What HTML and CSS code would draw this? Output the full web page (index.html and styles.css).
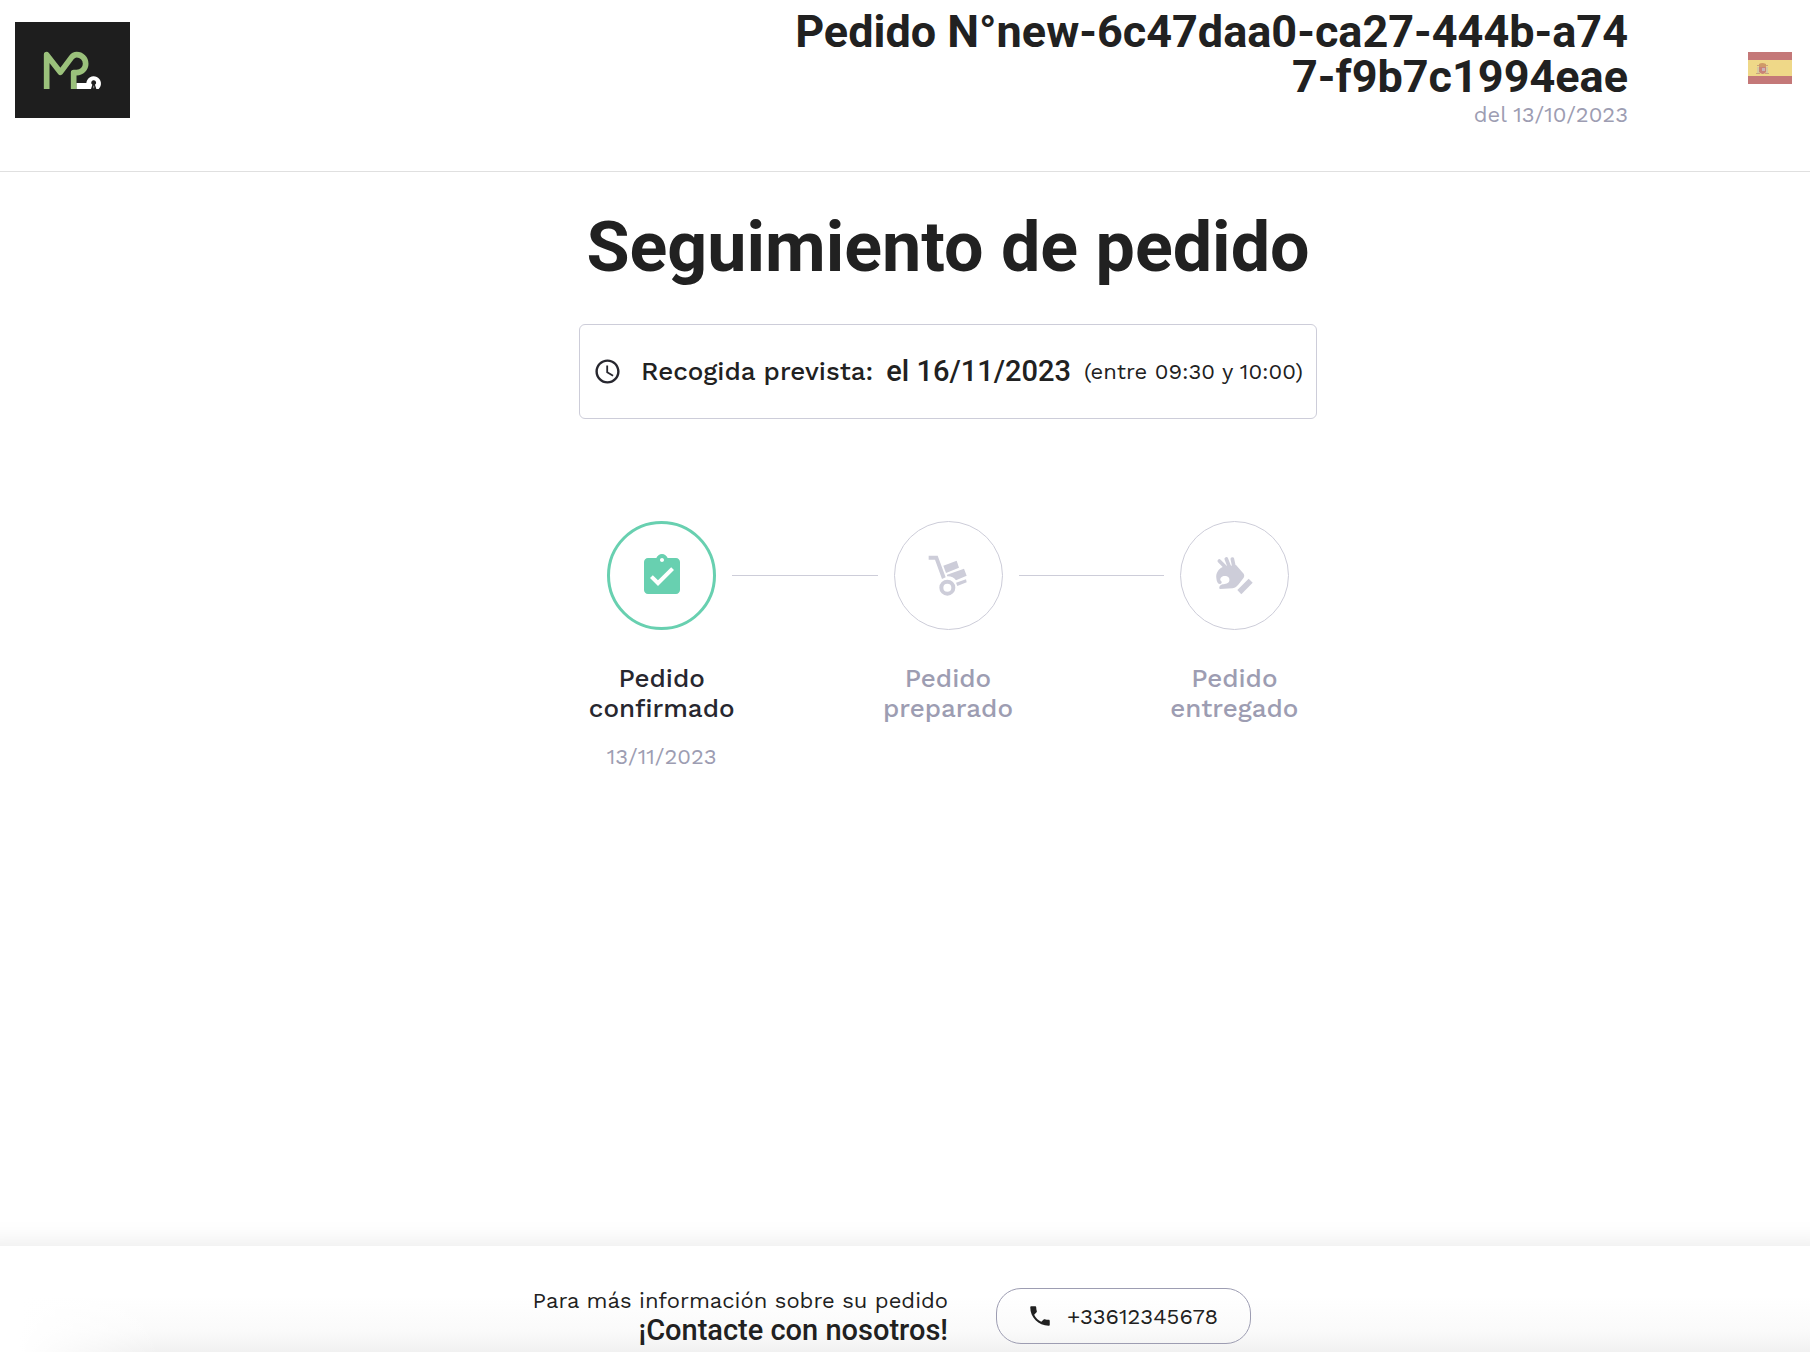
FILE: index.html
```html
<!DOCTYPE html>
<html lang="es">
<head>
  <meta charset="UTF-8" />
  <meta name="viewport" content="width=device-width, initial-scale=1.0"/>
  <title>Seguimiento de pedido</title>
  <link rel="stylesheet" href="styles.css">
</head>
<body>

  <!-- Header -->
  <header class="header">
    <a class="logo" href="#" aria-label="MP">
      <svg viewBox="45 66 345 288">
        <rect x="45" y="66" width="345" height="288" fill="#1e1e1e"/>
        <path d="M229 249h30a22 22 0 1 1 37 18h-67z" fill="#fff"/>
        <path d="M281 241a7 7 0 0 1 4 13l4 13h-16l4-13a7 7 0 0 1 4-13z" fill="#1e1e1e"/>
        <path d="M279 257h4v8h-4z" fill="#777"/>
        <path d="M140 267V164L181 217L214 173Q221 164 230 164A27 27 0 0 1 230 218H221V267" fill="none" stroke="#9bc17b" stroke-width="17" stroke-linejoin="round"/>
      </svg>
    </a>
    <div class="order">
      <h2>Pedido N°new-6c47daa0-ca27-444b-a747-f9b7c1994eae</h2>
      <p>del 13/10/2023</p>
    </div>
    <button class="lang" type="button" aria-label="Español">
      <svg viewBox="0 0 44 32">
        <rect width="44" height="32" fill="#c47878"/>
        <rect y="8" width="44" height="16" fill="#efd888"/>
        <path d="M9 15h2v6H9zM18 15h2v6h-2z" fill="#d6c9a0"/>
        <path d="M8 21h4v1H8zM17 21h4v1h-4zM9 13h2v1H9zM18 13h2v1h-2z" fill="#c9a27c"/>
        <path d="M11 12q3-2 7 0v3h-7z" fill="#cf9a68"/>
        <path d="M11 15h7v5q-3 4-7 0z" fill="#c98378"/>
        <path d="M14 16h3v3h-3z" fill="#c9b3b6"/>
      </svg>
    </button>
  </header>

  <!-- Tracking -->
  <main class="content">
    <h1>Seguimiento de pedido</h1>

    <div class="pickup">
      <svg class="clock" viewBox="0 0 24 24"><path d="M11.99 2C6.47 2 2 6.48 2 12s4.47 10 9.99 10C17.52 22 22 17.52 22 12S17.52 2 11.99 2zM12 20c-4.42 0-8-3.58-8-8s3.58-8 8-8 8 3.58 8 8-3.58 8-8 8zm.5-13H11v6l5.25 3.15.75-1.23-4.5-2.67z"/></svg>
      <span class="pickup-label">Recogida prevista:</span>
      <strong>el 16/11/2023</strong>
      <span class="pickup-time">(entre 09:30 y 10:00)</span>
    </div>

    <ol class="steps">
      <li class="step active">
        <div class="track">
          <div class="circle">
            <svg viewBox="0 0 24 24"><path d="M19 3h-4.18C14.4 1.84 13.3 1 12 1s-2.4.84-2.82 2H5c-1.1 0-2 .9-2 2v14c0 1.1.9 2 2 2h14c1.1 0 2-.9 2-2V5c0-1.1-.9-2-2-2zm-7 0c.55 0 1 .45 1 1s-.45 1-1 1-1-.45-1-1 .45-1 1-1zm-2 14l-4-4 1.41-1.41L10 14.17l6.59-6.59L18 9l-8 8z"/></svg>
          </div>
        </div>
        <p class="step-name">Pedido<br>confirmado</p>
        <p class="step-date">13/11/2023</p>
      </li>
      <li class="step">
        <div class="track">
          <div class="circle">
            <svg viewBox="70 64 144 144">
              <path d="M84 75h27l24 65-11 5-21-58H84z"/>
              <path d="M128 105l40-15 7 21-39 16z"/>
              <path d="M139 132l51-18 8 21-32 14q-9-13-27-12z"/>
              <path d="M166 156l30-10 2 9-28 11z"/>
              <path fill-rule="evenodd" d="M140 147a24 24 0 1 1 0 48a24 24 0 0 1 0-48zm0 12a12 12 0 1 0 0 24a12 12 0 0 0 0-24z"/>
            </svg>
          </div>
        </div>
        <p class="step-name">Pedido<br>preparado</p>
      </li>
      <li class="step">
        <div class="track">
          <div class="circle">
            <svg viewBox="60 64 144 144">
              <path d="M88 91l22 22M109 85l11 28M127 85l6 28" fill="none" stroke="#cdcdd9" stroke-width="11" stroke-linecap="round"/>
              <path d="M100 108C86 114 77 126 79 142C80 155 85 161 91 160C97 158 96 152 91 149C90 141 96 136 104 136C114 136 120 142 118 150C116 158 106 160 98 161C87 163 86 174 90 175L128 173C136 172 140 168 146 161L161 141C164 136 163 131 159 127L138 103Z"/>
              <path d="M176 144l12 12-34 35-12-13z"/>
            </svg>
          </div>
        </div>
        <p class="step-name">Pedido<br>entregado</p>
      </li>
    </ol>
  </main>

  <!-- Contact -->
  <footer class="footer">
    <div class="contact">
      <p>Para más información sobre su pedido</p>
      <strong>¡Contacte con nosotros!</strong>
    </div>
    <a class="phone" href="tel:+33612345678">
      <svg viewBox="0 0 24 24"><path d="M6.62 10.79c1.44 2.83 3.76 5.14 6.59 6.59l2.2-2.2c.27-.27.67-.36 1.02-.24 1.12.37 2.33.57 3.57.57.55 0 1 .45 1 1V20c0 .55-.45 1-1 1-9.39 0-17-7.61-17-17 0-.55.45-1 1-1h3.5c.55 0 1 .45 1 1 0 1.25.2 2.45.57 3.57.11.35.03.74-.25 1.02l-2.2 2.2z"/></svg>
      +33612345678
    </a>
  </footer>

</body>
</html>
```
FILE: styles.css
```css
* { margin: 0; padding: 0; box-sizing: border-box; }

body {
  min-height: 100vh;
  display: flex;
  flex-direction: column;
  background-color: #fff;
  color: #212121;
  font-family: "Work Sans", Inter, sans-serif;
  font-size: 22px;
}

svg {
  display: block;
}

h1, h2, strong {
  font-family: Roboto, sans-serif;
}

/* --- HEADER --- */
.header {
  display: flex;
  align-items: flex-start;
  min-height: 172px;
  padding: 9px 18px 0 15px;
  border-bottom: 1px solid #e0e0e0;
}

.logo {
  margin-top: 13px;
}

.logo svg {
  width: 115px;
  height: 96px;
}

.order {
  flex: 1;
  max-width: 850px;
  margin-left: auto;
  text-align: right;
}

.order h2 {
  font-size: 45px;
  line-height: 45px;
  word-break: break-all;
}

.order p {
  line-height: 32px;
  color: #9d9db2;
}

.lang {
  margin: 43px 0 0 120px;
  border: none;
  background: none;
  cursor: pointer;
}

.lang svg {
  width: 44px;
  height: 32px;
}

/* --- TRACKING --- */
.content {
  flex: 1;
  display: flex;
  flex-direction: column;
  align-items: center;
  padding: 35px 0 40px 86px;
}

.content h1 {
  font-size: 70px;
  line-height: 80px;
  text-align: center;
}

.pickup {
  display: flex;
  align-items: center;
  gap: 13px;
  margin-top: 37px;
  padding: 30px 13px;
  border: 1px solid #cdcdd9;
  border-radius: 6px;
  line-height: 33px;
}

.clock {
  width: 29px;
  height: 29px;
  margin-right: 6px;
  fill: #27272f;
}

.pickup-label {
  font-size: 26px;
  font-weight: 500;
}

.pickup strong {
  font-size: 29px;
  font-weight: 500;
}

.steps {
  display: grid;
  grid-template-columns: repeat(3, 1fr);
  width: 100%;
  max-width: 859px;
  margin-top: 102px;
  list-style: none;
  text-align: center;
}

.track {
  display: flex;
  align-items: center;
  gap: 16px;
}

.track::before,
.track::after {
  content: "";
  flex: 1;
  height: 1px;
  background-color: #cdcdd9;
}

.step:first-child .track::before,
.step:last-child .track::after {
  background: none;
}

.circle {
  display: flex;
  align-items: center;
  justify-content: center;
  width: 109px;
  height: 109px;
  border: 1px solid #cdcdd9;
  border-radius: 50%;
}

.circle svg {
  width: 48px;
  height: 48px;
  fill: #cdcdd9;
}

.step-name {
  margin-top: 33px;
  font-size: 26px;
  font-weight: 500;
  line-height: 30px;
  color: #9d9db2;
}

.step-date {
  margin-top: 20px;
  line-height: 28px;
  color: #9d9db2;
}

.active .circle {
  border: 3px solid #68d0b0;
}

.active .circle svg {
  fill: #68d0b0;
}

.active .step-name {
  color: #27272f;
}

/* --- FOOTER --- */
.footer {
  display: grid;
  grid-template-columns: 1fr 1fr;
  align-items: center;
  padding: 40px 0 6px 86px;
  background:
    linear-gradient(to right, #fff 20px, transparent 160px),
    linear-gradient(to top, #f1f1f1, #fafafa 20px, #fff 56px);
  /* spread keeps the shadow even across the full width */
  box-shadow: 0 26px 26px 26px rgba(0, 0, 0, 0.1);
}

.contact {
  padding-top: 1px;
  text-align: right;
}

.contact p {
  line-height: 28px;
}

.contact strong {
  display: block;
  font-size: 29px;
  font-weight: 500;
  line-height: 31px;
}

.phone {
  display: flex;
  align-items: center;
  gap: 14px;
  justify-self: start;
  height: 56px;
  margin-left: 48px;
  padding: 0 32px 0 30px;
  border: 1px solid #9d9db2;
  border-radius: 25px;
  color: #212121;
  text-decoration: none;
}

.phone svg {
  width: 26px;
  height: 26px;
  fill: #212121;
}
```
